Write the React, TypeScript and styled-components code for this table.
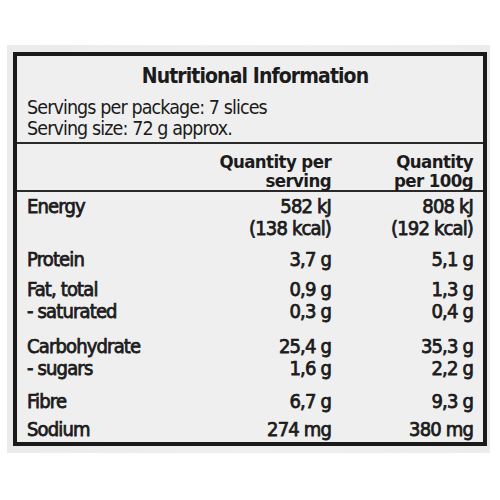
import styled, { createGlobalStyle } from 'styled-components';

const GlobalStyle = createGlobalStyle`
  html, body {
    margin: 0;
    padding: 0;
    background: #ffffff;
  }
  body {
    font-family: 'DejaVu Sans Condensed', 'DejaVu Sans', sans-serif;
    font-stretch: condensed;
    color: #1b1b1b;
  }
`;

type Line = [string, string, string];

// gap = space above the group, taken from the printed label
const groups: { gap: number; lines: Line[] }[] = [
  {
    gap: 0,
    lines: [
      ['Energy', '582 kJ', '808 kJ'],
      ['', '(138 kcal)', '(192 kcal)'],
    ],
  },
  { gap: 9, lines: [['Protein', '3,7 g', '5,1 g']] },
  {
    gap: 8,
    lines: [
      ['Fat, total', '0,9 g', '1,3 g'],
      ['- saturated', '0,3 g', '0,4 g'],
    ],
  },
  {
    gap: 13,
    lines: [
      ['Carbohydrate', '25,4 g', '35,3 g'],
      ['- sugars', '1,6 g', '2,2 g'],
    ],
  },
  { gap: 11, lines: [['Fibre', '6,7 g', '9,3 g']] },
  { gap: 6, lines: [['Sodium', '274 mg', '380 mg']] },
];

const NutritionPanel = () => {
  return (
    <Page>
      <GlobalStyle />
      <Backing>
        <Label>
          <TitleSection>
            <Title>Nutritional Information</Title>
            <Servings>Servings per package: 7 slices</Servings>
            <Servings>Serving size: 72 g approx.</Servings>
          </TitleSection>
          <HeaderRow>
            <span />
            <HeaderCell>
              Quantity per
              <br />
              serving
            </HeaderCell>
            <HeaderCell>
              Quantity
              <br />
              per 100g
            </HeaderCell>
          </HeaderRow>
          <Body>
            {groups.map((group, i) => (
              <Group key={i} gap={group.gap}>
                {group.lines.map(([name, serving, per100], j) => (
                  <RowLine key={j}>
                    <Name>{name}</Name>
                    <Value>{serving}</Value>
                    <Value>{per100}</Value>
                  </RowLine>
                ))}
              </Group>
            ))}
          </Body>
        </Label>
      </Backing>
    </Page>
  );
};

const Page = styled.div`
  width: 500px;
  height: 500px;
  padding: 45px 10px 0 7px;
  box-sizing: border-box;
`;

const Backing = styled.div`
  width: 483px;
  height: 408px;
  box-sizing: border-box;
  padding: 7px 0 0 6px;
  background: linear-gradient(90deg, #ebebeb 0%, #efefef 50%, #ececec 100%);
`;

const Label = styled.div`
  width: 474px;
  height: 394px;
  box-sizing: border-box;
  border: 4px solid #1a1a1a;
  background: #efefef;
  display: flex;
  flex-direction: column;
`;

const TitleSection = styled.div`
  padding: 6px 10px 3px;
  border-bottom: 2px solid #2a2a2a;
`;

const Title = styled.div`
  text-align: center;
  font-weight: 700;
  font-size: 21px;
  line-height: 28px;
  letter-spacing: -0.9px;
  padding-left: 10px;
  margin-bottom: 7px;
`;

const Servings = styled.div`
  font-size: 19.5px;
  line-height: 21px;
  letter-spacing: -0.9px;
`;

const Columns = `
  display: grid;
  grid-template-columns: 1fr 120px 142px;
`;

const HeaderRow = styled.div`
  ${Columns};
  padding: 8px 10px 0;
  border-bottom: 2px solid #2a2a2a;
`;

const HeaderCell = styled.div`
  text-align: right;
  font-weight: 700;
  font-size: 18.5px;
  line-height: 19px;
  letter-spacing: -0.6px;
`;

const Body = styled.div`
  padding: 3px 10px 0;
  display: flex;
  flex-direction: column;
`;

const Group = styled.div<{ gap: number }>`
  display: flex;
  flex-direction: column;
  margin-top: ${({ gap }) => gap}px;
`;

const RowLine = styled.div`
  ${Columns};
  font-size: 20px;
  line-height: 22px;
  letter-spacing: -0.85px;
  -webkit-text-stroke: 0.75px #1b1b1b;
`;

const Name = styled.span`
  white-space: nowrap;
`;

const Value = styled.span`
  text-align: right;
  white-space: nowrap;
`;

export default NutritionPanel;
